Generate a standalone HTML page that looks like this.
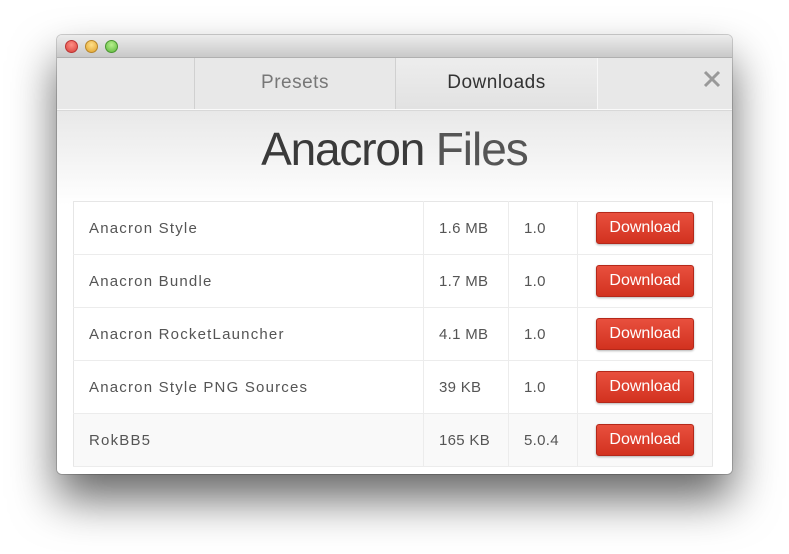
<!DOCTYPE html>
<html><head><style>
body{margin:0;width:789px;height:554px;background:#fff;position:relative;overflow:hidden;font-family:"Liberation Sans",sans-serif}
.win{position:absolute;left:57px;top:35px;width:675px;height:439px;border-radius:5px;background:linear-gradient(#e8e8e8 75px,#fff 170px);box-shadow:0 25px 45px rgba(0,0,0,.6),0 0 0 1px rgba(0,0,0,.18);overflow:hidden}
.tb{height:22px;background:linear-gradient(#ececec,#c9c9c9);border-bottom:1px solid #b0b0b0}
.dot{position:absolute;top:5px;width:11px;height:11px;border-radius:50%}
.tabs{position:absolute;top:23px;left:0;right:0;height:51px;border-bottom:1px solid #fafafa;box-shadow:0 1px 0 #d8d8d8}
.tab{position:absolute;top:0;height:51px;line-height:50px;text-align:center;font-size:19px;color:#777;letter-spacing:.5px;border-left:1px solid #d0d0d0;border-right:1px solid #f7f7f7}
h1{position:absolute;top:87px;left:0;right:0;text-align:center;margin:0;font-size:46px;font-weight:normal;color:#3a3a3a;letter-spacing:-1.2px}
table{position:absolute;left:16px;top:166px;width:640px;border-collapse:collapse;background:#fff;border:1px solid #e6e6e6}
td{height:52px;border-bottom:1px solid #ececec;border-right:1px solid #ececec;font-size:15px;color:#555;padding:0 0 0 15px;letter-spacing:.3px}
td:first-child{letter-spacing:1.2px}
tr:last-child td{background:#f9f9f9}
.b{display:inline-block;width:96px;height:30px;line-height:30px;text-align:center;color:#fff;font-size:16px;background:linear-gradient(#e8503e,#d2321f);border:1px solid #b5281a;border-radius:3px;box-shadow:0 1px 2px rgba(0,0,0,.3);letter-spacing:0}
</style></head><body>
<div class="win">
<div class="tb"></div>
<div class="dot" style="left:8px;background:radial-gradient(circle at 50% 35%,#ff8f85,#d6403a);border:1px solid #b33"></div>
<div class="dot" style="left:28px;background:radial-gradient(circle at 50% 35%,#ffe08a,#e0a12a);border:1px solid #b8862a"></div>
<div class="dot" style="left:48px;background:radial-gradient(circle at 50% 35%,#b8f08e,#5bb73a);border:1px solid #4a9530"></div>
<div class="tabs">
<div class="tab" style="left:137px;width:200px">Presets</div>
<div class="tab" style="left:338px;width:201px;color:#333;background:linear-gradient(#ededed,#e2e2e2)">Downloads</div>
<svg style="position:absolute;right:11px;top:12px" width="18" height="18"><path d="M2 2L16 16M16 2L2 16" stroke="#999" stroke-width="3"/></svg>
</div>
<h1>Anacron <span style="font-weight:300;color:#555;letter-spacing:-1px">Files</span></h1>
<table>
<tr><td style="width:334px">Anacron Style</td><td style="width:69px">1.6 MB</td><td style="width:53px">1.0</td><td style="border-right:0;padding-left:18px"><span class="b">Download</span></td></tr>
<tr><td>Anacron Bundle</td><td>1.7 MB</td><td>1.0</td><td style="border-right:0;padding-left:18px"><span class="b">Download</span></td></tr>
<tr><td>Anacron RocketLauncher</td><td>4.1 MB</td><td>1.0</td><td style="border-right:0;padding-left:18px"><span class="b">Download</span></td></tr>
<tr><td>Anacron Style PNG Sources</td><td>39 KB</td><td>1.0</td><td style="border-right:0;padding-left:18px"><span class="b">Download</span></td></tr>
<tr><td>RokBB5</td><td>165 KB</td><td>5.0.4</td><td style="border-right:0;padding-left:18px"><span class="b">Download</span></td></tr>
</table>
</div>
</body></html>
